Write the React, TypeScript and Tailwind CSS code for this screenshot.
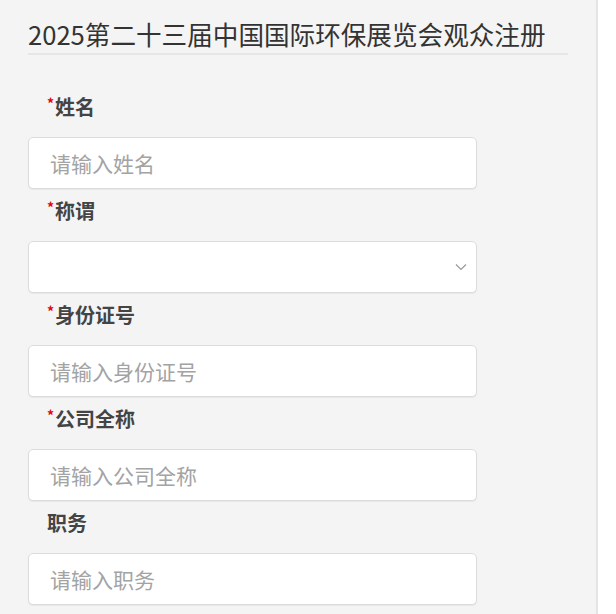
import React from 'react';

type Field = {
  label: string;
  required: boolean;
  placeholder?: string;
  select?: boolean;
};

const fields: Field[] = [
  { label: '姓名', required: true, placeholder: '请输入姓名' },
  { label: '称谓', required: true, select: true },
  { label: '身份证号', required: true, placeholder: '请输入身份证号' },
  { label: '公司全称', required: true, placeholder: '请输入公司全称' },
  { label: '职务', required: false, placeholder: '请输入职务' },
  { label: '部门', required: false, placeholder: '请输入部门' },
];

const Chevron = () => (
  <svg width="12" height="8" viewBox="0 0 12 8" fill="none" className="text-[#9a9a9a]">
    <path d="M1 1.5 L6 6.5 L11 1.5" stroke="currentColor" strokeWidth="1.2" />
  </svg>
);

const FormRow: React.FC<{ field: Field }> = ({ field }) => (
  <div>
    <div className="h-[52px] pl-[19px] pt-[8px]">
      <div className="flex items-start text-[20px] leading-[28px] font-bold text-[#444]">
        {field.required && <span className="text-[14px] leading-[20px] text-[#e60012] mr-[1px]">*</span>}
        <span>{field.label}</span>
      </div>
    </div>
    {field.select ? (
      <div className="w-[449px] h-[52px] bg-white border border-[#dcdcdc] rounded-[5px] shadow-[0_1px_1px_rgba(0,0,0,0.06)] flex items-center justify-end pr-[9px]">
        <Chevron />
      </div>
    ) : (
      <input
        placeholder={field.placeholder}
        className="block w-[449px] h-[52px] bg-white border border-[#dcdcdc] rounded-[5px] shadow-[0_1px_1px_rgba(0,0,0,0.06)] pl-[21px] text-[21px] text-[#333] placeholder:text-[#a3a3a3] outline-none"
      />
    )}
  </div>
);

export default function App() {
  return (
    <div
      className="w-[616px] h-[614px] overflow-hidden flex bg-white"
      style={{ fontFamily: '"Noto Sans CJK SC", "Noto Sans", sans-serif' }}
    >
      <div className="w-[598px] h-full bg-[#f4f4f4] border-r-[2px] border-[#e4e4e4] shrink-0">
        <div className="pl-[28px]">
          <div className="w-[540px] pt-[16px] pb-[1px] border-b-[2px] border-[#e6e6e6]">
            <h1 className="text-[25.6px] leading-[36px] font-normal text-[#333] whitespace-nowrap">
              2025第二十三届中国国际环保展览会观众注册
            </h1>
          </div>
          <div className="pt-[30px]">
            {fields.map((f) => (
              <FormRow key={f.label} field={f} />
            ))}
          </div>
        </div>
      </div>
    </div>
  );
}
